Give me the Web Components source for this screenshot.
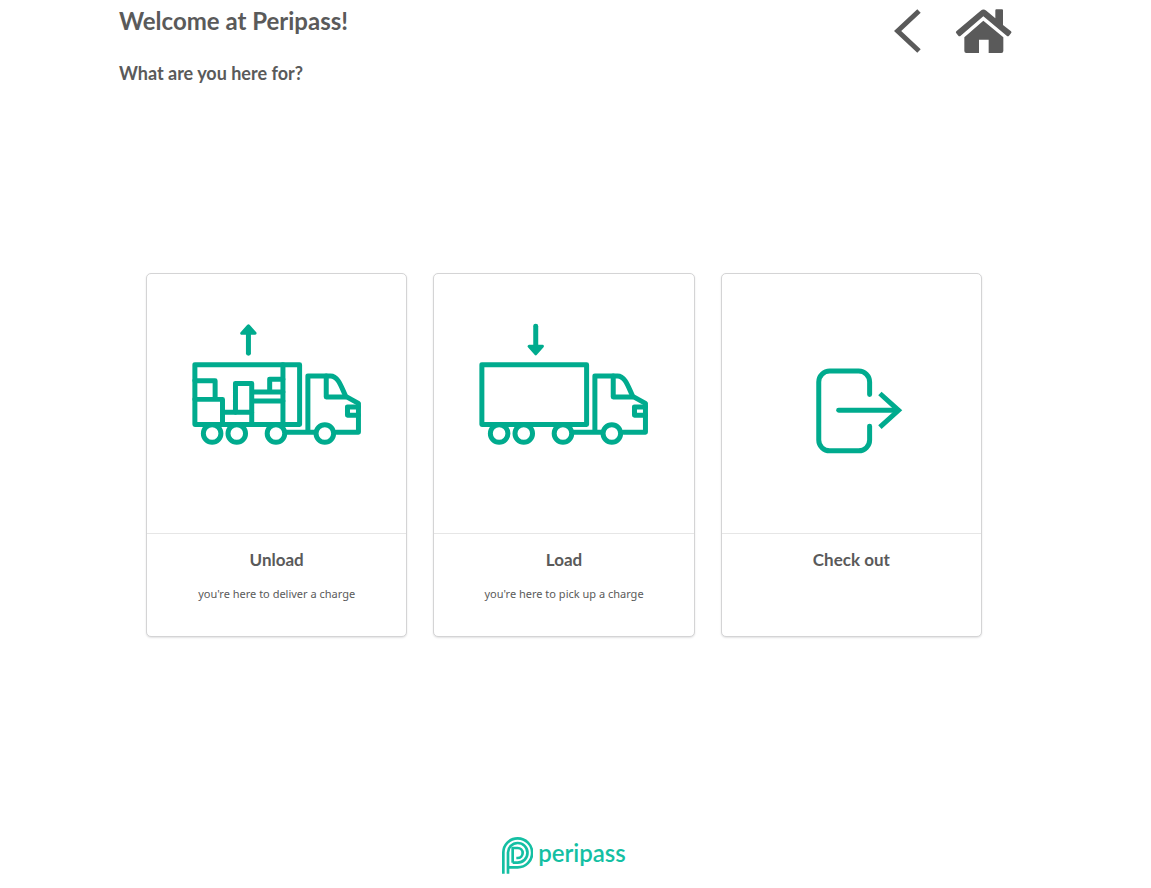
<!DOCTYPE html>
<html lang="en">
<head>
<meta charset="utf-8">
<meta name="viewport" content="width=device-width, initial-scale=1">
<title>Peripass</title>
<style>
    body { margin: 0; background: #fff; color: #5a5a5a; font-family: Lato, "Liberation Sans", sans-serif; }
</style>
</head>
<body>
<kiosk-page>
    <kiosk-header slot="header">
        Welcome at Peripass!
        <span slot="question">What are you here for?</span>
    </kiosk-header>
    <choice-card icon="unload">
        Unload
        <span slot="description">you're here to deliver a charge</span>
    </choice-card>
    <choice-card icon="load">
        Load
        <span slot="description">you're here to pick up a charge</span>
    </choice-card>
    <choice-card icon="checkout">Check out</choice-card>
    <peripass-logo slot="footer">peripass</peripass-logo>
</kiosk-page>

<script>
// trailer outline, cab and wheels are the same for both trucks
const truck = `
    <rect x="48" y="91" width="105" height="60"/>
    <path d="M129 158.6H178M190 158.6H212V129.7L199.3 122.7C195 114 192 102.3 184 102.3H161.3V158.6"/>
    <path d="M179.7 102.3V123.3H199.3M212 133.3H201V141.6H212"/>
    <g fill="#fff">
        <circle cx="65.3" cy="159.9" r="8.8"/>
        <circle cx="90" cy="159.9" r="8.8"/>
        <circle cx="129.3" cy="159.9" r="8.8"/>
        <circle cx="178.3" cy="159.9" r="8.8"/>
    </g>`;

const icons = {
    unload: `
        <path d="M101.7 79.5V60"/>
        <path d="M101.7 52L95 59.5H108.4Z" fill="#00ab8e" stroke-width="3"/>
        <path d="M136.3 91V151M48 107H68.3V125.7M48 125.7H75.7V151M75.7 138.6H105"/>
        <path d="M88.7 138.6V109.7H105V151M105 118.3H136.3M105 127.3H136.3M123 118.3V105.6H136.3"/>
        ${truck}`,
    load: `
        <path d="M102 52.5V72"/>
        <path d="M102 80L95.3 72.5H108.7Z" fill="#00ab8e" stroke-width="3"/>
        ${truck}`,
    checkout: `
        <path d="M148 120.7V108.3A11 11 0 0 0 137 97.3H108A11 11 0 0 0 97 108.3V166.3A11 11 0 0 0 108 177.3H137A11 11 0 0 0 148 166.3V152.7"/>
        <path d="M117 136.7H176"/>
        <path d="M158.3 119.8L177 136.7L158.3 153.6" stroke-linecap="butt" stroke-linejoin="miter"/>`
};

class KioskPage extends HTMLElement {
    constructor() {
        super();
        this.attachShadow({ mode: 'open' }).innerHTML = `
            <style>
                :host { display: flex; flex-direction: column; align-items: center; min-height: 100vh; box-sizing: border-box; padding-right: 20px; }
                .inner { width: 100%; max-width: 893px; box-sizing: border-box; }
                main, footer { padding: 0 30px 0 27px; }
                main { flex: 1; display: grid; grid-template-columns: repeat(3, 1fr); gap: 26px; align-content: center; }
                footer { display: flex; justify-content: center; padding-top: 27px; padding-bottom: 14px; }
            </style>
            <div class="inner"><slot name="header"></slot></div>
            <main class="inner"><slot></slot></main>
            <footer class="inner"><slot name="footer"></slot></footer>
        `;
    }
}

class KioskHeader extends HTMLElement {
    constructor() {
        super();
        this.attachShadow({ mode: 'open' }).innerHTML = `
            <style>
                :host { display: block; }
                header { display: flex; justify-content: space-between; align-items: flex-start; min-height: 100px; padding-top: 5px; box-sizing: border-box; }
                h1, h2 { margin: 0; font-weight: 700; }
                h1 { font-size: 24px; line-height: 32px; }
                h2 { font-size: 18px; line-height: 24px; margin-top: 24px; }
                nav { display: flex; gap: 34px; padding-top: 3px; }
                a { display: block; color: inherit; }
                svg { display: block; height: 46px; fill: currentColor; }
            </style>
            <header>
                <div>
                    <h1><slot></slot></h1>
                    <h2><slot name="question"></slot></h2>
                </div>
                <nav>
                    <a href="#back" aria-label="Back">
                        <svg viewBox="39 24 81 138" width="27"><path d="M114 33L50 93L114 153" fill="none" stroke="currentColor" stroke-width="15"/></svg>
                    </a>
                    <a href="#home" aria-label="Home">
                        <svg viewBox="225 24 171 138" width="57">
                            <path d="M229 94L302 32Q310 25 319 32L346 55V31Q346 28 349 28H366Q369 28 369 31V75L393 94Q396 97 393 100L387 107Q384 110 380 107L310 49L242 107Q238 110 235 107L229 100Q226 97 229 94Z"/>
                            <path d="M310 62L370 112V153Q370 159 364 159H326V119H297V159H259Q253 159 253 153V112Z"/>
                        </svg>
                    </a>
                </nav>
            </header>
        `;
    }
}

class ChoiceCard extends HTMLElement {
    constructor() {
        super();
        this.attachShadow({ mode: 'open' }).innerHTML = `
            <style>
                :host { display: block; }
                a { display: block; height: 100%; box-sizing: border-box; border: 1px solid #d4d4d5; border-radius: 5px; box-shadow: 0 1px 2px #e2e2e3; background: #fff; color: inherit; text-decoration: none; text-align: center; }
                svg { display: block; width: 100%; aspect-ratio: 1; fill: none; stroke: #00ab8e; stroke-width: 5; stroke-linecap: round; stroke-linejoin: round; }
                .content { min-height: 103px; box-sizing: border-box; border-top: 1px solid #e6e6e6; padding: 14px 14px 0; }
                h3 { margin: 0; font-size: 17px; line-height: 24px; font-weight: 700; }
                p { margin: 14px 0 0; font-family: "Noto Sans", "Open Sans", sans-serif; font-size: 11px; line-height: 16px; }
            </style>
            <a href="#${this.getAttribute('icon')}">
                <svg viewBox="0 0 260 260" aria-hidden="true">${icons[this.getAttribute('icon')]}</svg>
                <div class="content">
                    <h3><slot></slot></h3>
                    <p><slot name="description"></slot></p>
                </div>
            </a>
        `;
    }
}

class PeripassLogo extends HTMLElement {
    constructor() {
        super();
        this.attachShadow({ mode: 'open' }).innerHTML = `
            <style>
                :host { display: flex; align-items: flex-start; gap: 5px; color: #14bfa3; font-size: 24px; line-height: 32px; font-weight: 600; }
                svg { display: block; width: 31px; height: 37px; fill: none; stroke: currentColor; stroke-width: 8; }
            </style>
            <svg viewBox="38 38 93 111" aria-hidden="true">
                <path d="M42 148V86A43 43 0 0 1 85 42A43.5 43.5 0 0 1 85 129H56"/>
                <path d="M56 148V86A29 29 0 0 1 85 56A29.5 29.5 0 0 1 85 115H70"/>
                <path d="M70 115V71H85A15 15 0 0 1 85 101H81"/>
            </svg>
            <span><slot></slot></span>
        `;
    }
}

customElements.define('kiosk-page', KioskPage);
customElements.define('kiosk-header', KioskHeader);
customElements.define('choice-card', ChoiceCard);
customElements.define('peripass-logo', PeripassLogo);
</script>
</body>
</html>
